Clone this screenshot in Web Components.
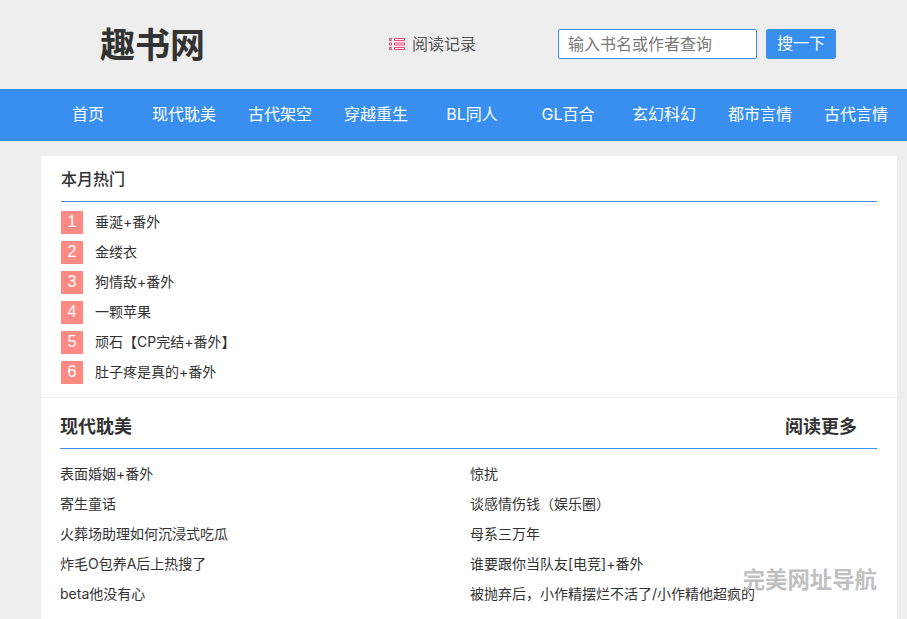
<!DOCTYPE html>
<html lang="zh"><head><meta charset="utf-8"><title>趣书网</title>
<style>
html,body{margin:0;padding:0;background:#eee;height:619px;overflow:hidden}
body{font-family:"Noto Sans CJK SC","Liberation Sans",sans-serif;color:#333;position:relative}
</style></head><body>
<qs-header></qs-header>
<qs-nav></qs-nav>
<qs-main>
  <qs-hot title="本月热门"></qs-hot>
  <qs-cat title="现代耽美" more="阅读更多"></qs-cat>
</qs-main>
<qs-mark>完美网址导航</qs-mark>
<script>
const base=`*{box-sizing:border-box}a{color:inherit;text-decoration:none}`;
const mix=`font-family:Inter,"Noto Sans CJK SC",sans-serif`;
function def(name,render){customElements.define(name,class extends HTMLElement{connectedCallback(){if(this.shadowRoot)return;this.attachShadow({mode:'open'}).innerHTML=render(this)}})}
def('qs-header',()=>`<style>${base}
:host{display:flex;height:89px;background:#eee;align-items:flex-start}
.logo{margin:18px 0 0 100px;width:289px;font-size:35px;line-height:50px;font-weight:700;color:#333}
.rec{display:flex;align-items:center;gap:7px;width:169px;margin-top:28px;height:30px;font-size:16px;color:#555}
.rec svg{margin-top:1px}
form{display:flex;gap:9px;margin-top:29px}
.in{width:199px;height:30px;border:1px solid #388fef;border-radius:2px;background:#fff;padding:0 9px;font-size:16px;line-height:26px;color:#777}
.btn{width:70px;height:30px;border-radius:3px;background:#388fef;color:#fff;font-size:16px;line-height:27px;text-align:center}
</style>
<a class="logo">趣书网</a>
<a class="rec"><svg width="16" height="14" viewBox="0 0 16 14" fill="none" stroke="#f0457a" stroke-width="1"><path d="M.5 1.500h2v2h-2zM.5 6h2v2h-2zM.5 10.500h2v2h-2zM5.500 1.500h10v2h-10zM5.500 6h10v2h-10zM5.500 10.500h10v2h-10z"/></svg><span>阅读记录</span></a>
<form><div class="in">输入书名或作者查询</div><div class="btn">搜一下</div></form>`);
def('qs-nav',()=>{const n=['首页','现代耽美','古代架空','穿越重生','BL同人','GL百合','玄幻科幻','都市言情','古代言情'];
return `<style>${base}
:host{display:flex;height:52px;background:#388fef;padding-left:40px}
a{flex:0 0 96px;text-align:center;line-height:50px;height:52px;font-size:16px;color:#fff;${mix}}
</style>${n.map(t=>`<a>${t}</a>`).join('')}`});
def('qs-main',()=>`<style>${base}
:host{display:block;width:856px;margin:15px 0 0 41px;background:#fff;height:478px;overflow:hidden}
</style><slot></slot>`);
def('qs-hot',h=>{const n=['垂涎+番外','金缕衣','狗情敌+番外','一颗苹果','顽石【CP完结+番外】','肚子疼是真的+番外'];
return `<style>${base}
:host{display:block;padding:0 20px 10px;border-bottom:1px solid #eee}
h2{margin:0;height:46px;line-height:44px;font-size:16px;font-weight:500;color:#333;border-bottom:1px solid #4a86d8}
ul{margin:0;padding:5px 0 0;list-style:none}
li{display:flex;height:30px;align-items:center;font-size:14px;color:#333}
b{width:22px;height:23px;background:#ff8a84;color:#fff;font:400 16px/22px "Liberation Sans",sans-serif;text-align:center;margin-right:12px}
a{position:relative;top:-1px;${mix}}
</style><h2>${h.getAttribute('title')}</h2><ul>${n.map((t,i)=>`<li><b>${i+1}</b><a>${t}</a></li>`).join('')}</ul>`});
def('qs-cat',h=>{const n=['表面婚姻+番外','惊扰','寄生童话','谈感情伤钱（娱乐圈）','火葬场助理如何沉浸式吃瓜','母系三万年','炸毛O包养A后上热搜了','谁要跟你当队友[电竞]+番外','beta他没有心','被抛弃后，小作精摆烂不活了/小作精他超疯的'];
return `<style>${base}
:host{display:block;padding:0 20px}
h2{display:flex;justify-content:space-between;margin:0 0 0 -1px;height:51px;padding:0 20px 0 0;line-height:54px;font-size:18px;font-weight:700;color:#333;border-bottom:1px solid #388fef}
ul{display:grid;grid-template-columns:410px 1fr;margin:0 0 0 -1px;padding:10px 0 0;list-style:none}
li{height:30px;line-height:29px;font-size:14px;color:#333;white-space:nowrap;${mix}}
</style><h2><span>${h.getAttribute('title')}</span><a>${h.getAttribute('more')}</a></h2><ul>${n.map(t=>`<li><a>${t}</a></li>`).join('')}</ul>`});
def('qs-mark',()=>`<style>:host{position:absolute;right:30px;top:564px;font-size:22.4px;line-height:28px;font-weight:700;color:#c0c0c0}</style><slot></slot>`);
</script>
</body></html>
